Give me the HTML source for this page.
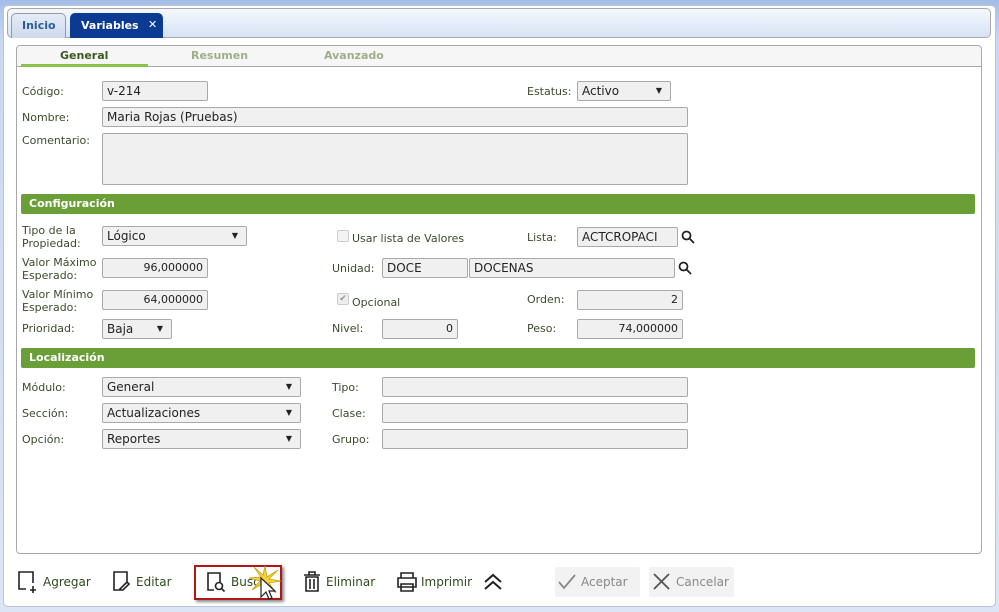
<!DOCTYPE html>
<html><head><meta charset="utf-8"><style>
*{box-sizing:border-box;margin:0;padding:0}
body{width:999px;height:612px;position:relative;overflow:hidden;font-family:"DejaVu Sans","Liberation Sans",sans-serif;font-size:11px;color:#3d4a2c;background:linear-gradient(#a3bde8,#c9d8f0 40px,#dbe5f5)}
.a{position:absolute}
.win{left:3px;top:5px;width:993px;height:602px;background:#fff;border:1px solid #b8c4d8;border-radius:5px}
.tabbar{left:7px;top:8px;width:984px;height:30px;border:1px solid #a8a8a8;border-radius:5px;background:linear-gradient(#f4f8fd,#d6e3f4)}
.tab{top:13px;height:25px;border:1px solid #999;border-bottom:none;border-radius:5px 5px 0 0;font-weight:bold;font-size:11px;line-height:23px;padding-left:10px;white-space:nowrap}
.panel{left:16px;top:45px;width:966px;height:509px;border:1px solid #a8a8a8;border-radius:4px;background:#fff}
.ph{left:17px;top:46px;width:964px;height:21px;background:#f6f6f6;border-bottom:1px solid #a8a8a8;border-radius:4px 4px 0 0}
.st{top:49px;font-weight:bold;font-size:11px;color:#9cb088}
.lbl{font-size:11px;color:#3d4a2c;line-height:13px}
.in{background:#f0f0f0;border:1px solid #a9a9a9;border-radius:2px;height:20px;font-size:12px;color:#222;line-height:18px;padding:0 4px;white-space:nowrap;overflow:hidden}
.r{text-align:right;font-size:11px}
.sel::after{content:"▼";position:absolute;right:8px;top:0;font-size:8px;color:#222}
.bar{left:21px;width:954px;height:20px;background:#6a9f38;color:#fff;font-weight:bold;font-size:11px;line-height:20px;padding-left:8px;border-radius:2px}
.btn{top:572px;font-size:12px;line-height:20px;color:#2f4a1e}
</style></head><body>
<div class="a win"></div>
<div class="a tabbar"></div>
<div class="a tab" style="left:11px;width:55px;background:linear-gradient(#e4ecf7,#cdd9eb);color:#2a5c9a">Inicio</div>
<div class="a tab" style="left:70px;width:93px;background:#0b3a92;color:#fff;border-color:#0b3a92">Variables</div>
<div class="a" style="left:148px;top:18px;color:#fff;font-weight:bold;font-size:11px">✕</div>
<div class="a panel"></div>
<div class="a ph"></div>
<div class="a" style="left:21px;top:64px;width:127px;height:3px;background:#8bc34a"></div>
<div class="a st" style="left:60px;color:#3a5a1a">General</div>
<div class="a st" style="left:191px">Resumen</div>
<div class="a st" style="left:324px">Avanzado</div>

<div class="a lbl" style="left:22px;top:85px">Código:</div>
<div class="a in" style="left:102px;top:81px;width:106px">v-214</div>
<div class="a lbl" style="left:527px;top:85px">Estatus:</div>
<div class="a in sel" style="left:577px;top:81px;width:94px;background:#f0f0f0">Activo</div>
<div class="a lbl" style="left:22px;top:111px">Nombre:</div>
<div class="a in" style="left:102px;top:107px;width:586px">Maria Rojas (Pruebas)</div>
<div class="a lbl" style="left:22px;top:134px">Comentario:</div>
<div class="a in" style="left:102px;top:133px;width:586px;height:52px"></div>

<div class="a bar" style="top:194px">Configuración</div>
<div class="a lbl" style="left:22px;top:224px">Tipo de la<br>Propiedad:</div>
<div class="a in sel" style="left:102px;top:226px;width:145px">Lógico</div>
<div class="a" style="left:337px;top:230px;width:12px;height:12px;border:1px solid #ccc;border-radius:2px;background:#f4f4f4"></div>
<div class="a lbl" style="left:352px;top:232px">Usar lista de Valores</div>
<div class="a lbl" style="left:527px;top:231px">Lista:</div>
<div class="a in" style="left:577px;top:227px;width:101px">ACTCROPACI</div>
<svg class="a" style="left:681px;top:230px" width="14" height="14" fill="none" stroke="#222" stroke-width="1.8"><circle cx="5.5" cy="5.5" r="4"/><path d="M8.5 8.5l4.5 4.5"/></svg>
<div class="a lbl" style="left:22px;top:256px">Valor Máximo<br>Esperado:</div>
<div class="a in r" style="left:102px;top:258px;width:106px">96,000000</div>
<div class="a lbl" style="left:332px;top:262px">Unidad:</div>
<div class="a in" style="left:382px;top:258px;width:86px">DOCE</div>
<div class="a in" style="left:469px;top:258px;width:206px">DOCENAS</div>
<svg class="a" style="left:678px;top:261px" width="14" height="14" fill="none" stroke="#222" stroke-width="1.8"><circle cx="5.5" cy="5.5" r="4"/><path d="M8.5 8.5l4.5 4.5"/></svg>
<div class="a lbl" style="left:22px;top:288px">Valor Mínimo<br>Esperado:</div>
<div class="a in r" style="left:102px;top:290px;width:106px">64,000000</div>
<div class="a" style="left:337px;top:293px;width:12px;height:12px;border:1px solid #ccc;border-radius:2px;background:#eee;font-size:9px;line-height:10px;color:#999;text-align:center">✔</div>
<div class="a lbl" style="left:352px;top:296px">Opcional</div>
<div class="a lbl" style="left:527px;top:293px">Orden:</div>
<div class="a in r" style="left:577px;top:290px;width:106px">2</div>
<div class="a lbl" style="left:22px;top:322px">Prioridad:</div>
<div class="a in sel" style="left:102px;top:319px;width:70px">Baja</div>
<div class="a lbl" style="left:332px;top:322px">Nivel:</div>
<div class="a in r" style="left:382px;top:319px;width:76px">0</div>
<div class="a lbl" style="left:527px;top:322px">Peso:</div>
<div class="a in r" style="left:577px;top:319px;width:106px">74,000000</div>

<div class="a bar" style="top:348px">Localización</div>
<div class="a lbl" style="left:22px;top:381px">Módulo:</div>
<div class="a in sel" style="left:102px;top:377px;width:199px">General</div>
<div class="a lbl" style="left:332px;top:381px">Tipo:</div>
<div class="a in" style="left:382px;top:377px;width:306px"></div>
<div class="a lbl" style="left:22px;top:407px">Sección:</div>
<div class="a in sel" style="left:102px;top:403px;width:199px">Actualizaciones</div>
<div class="a lbl" style="left:332px;top:407px">Clase:</div>
<div class="a in" style="left:382px;top:403px;width:306px"></div>
<div class="a lbl" style="left:22px;top:433px">Opción:</div>
<div class="a in sel" style="left:102px;top:429px;width:199px">Reportes</div>
<div class="a lbl" style="left:332px;top:433px">Grupo:</div>
<div class="a in" style="left:382px;top:429px;width:306px"></div>

<svg class="a" style="left:16px;top:570px" width="24" height="26" fill="none" stroke="#222" stroke-width="1.6"><path d="M10 19H3V2h14v11M17 16v7M14 20h6"/></svg>
<div class="a btn" style="left:43px">Agregar</div>
<svg class="a" style="left:110px;top:570px" width="24" height="24" fill="none" stroke="#222" stroke-width="1.6"><path d="M8 20H4V2h13v10M9 20l8-8 2 2-6 6H9z"/></svg>
<div class="a btn" style="left:136px">Editar</div>
<div class="a" style="left:194px;top:565px;width:88px;height:35px;border:2px solid #b01818;box-shadow:2px 2px 3px #888"></div>
<svg class="a" style="left:206px;top:571px" width="24" height="24" fill="none" stroke="#222" stroke-width="1.6"><path d="M8 19H2V2h12v9"/><circle cx="13" cy="15" r="3.5"/><path d="M15.5 17.5l3 3"/></svg>
<div class="a btn" style="left:231px">Busc</div>
<svg class="a" style="left:248px;top:564px" width="34" height="32"><path d="M17 2L19 13 30 6 21 15 33 17 21 19 28 29 18 21 16 31 14 20 4 26 12 17 1 14 13 13 6 3 15 11z" fill="#f3d23a" stroke="#c9a010" stroke-width="0.8"/></svg>
<svg class="a" style="left:259px;top:577px" width="20" height="28"><path d="M2 1v19l5-5 3 7 3-1-3-7h6z" fill="#fff" stroke="#222" stroke-width="1.2"/></svg>
<svg class="a" style="left:302px;top:571px" width="20" height="22" fill="none" stroke="#222" stroke-width="1.6"><path d="M2 4h16M7 4V1h6v3M4 6h12v14H4zM8 8v10M12 8v10"/></svg>
<div class="a btn" style="left:326px">Eliminar</div>
<svg class="a" style="left:396px;top:571px" width="22" height="22" fill="none" stroke="#222" stroke-width="1.6"><path d="M5 7V2h12v5M2 7h18v9H2zM5 13h12v7H5z"/></svg>
<div class="a btn" style="left:421px">Imprimir</div>
<svg class="a" style="left:483px;top:573px" width="20" height="18" fill="none" stroke="#222" stroke-width="2"><path d="M2 9l8-7 8 7M2 16l8-7 8 7"/></svg>
<div class="a" style="left:555px;top:567px;width:85px;height:30px;background:#f2f2f2;border-radius:2px"></div>
<svg class="a" style="left:558px;top:574px" width="18" height="16" fill="none" stroke="#888" stroke-width="1.8"><path d="M1 8l5 6L17 1"/></svg>
<div class="a btn" style="left:581px;color:#888;font-size:12px">Aceptar</div>
<div class="a" style="left:649px;top:567px;width:85px;height:30px;background:#f2f2f2;border-radius:2px"></div>
<svg class="a" style="left:653px;top:573px" width="17" height="17" fill="none" stroke="#555" stroke-width="1.8"><path d="M1 1l15 15M16 1L1 16"/></svg>
<div class="a btn" style="left:676px;color:#888;font-size:12px">Cancelar</div>
</body></html>
